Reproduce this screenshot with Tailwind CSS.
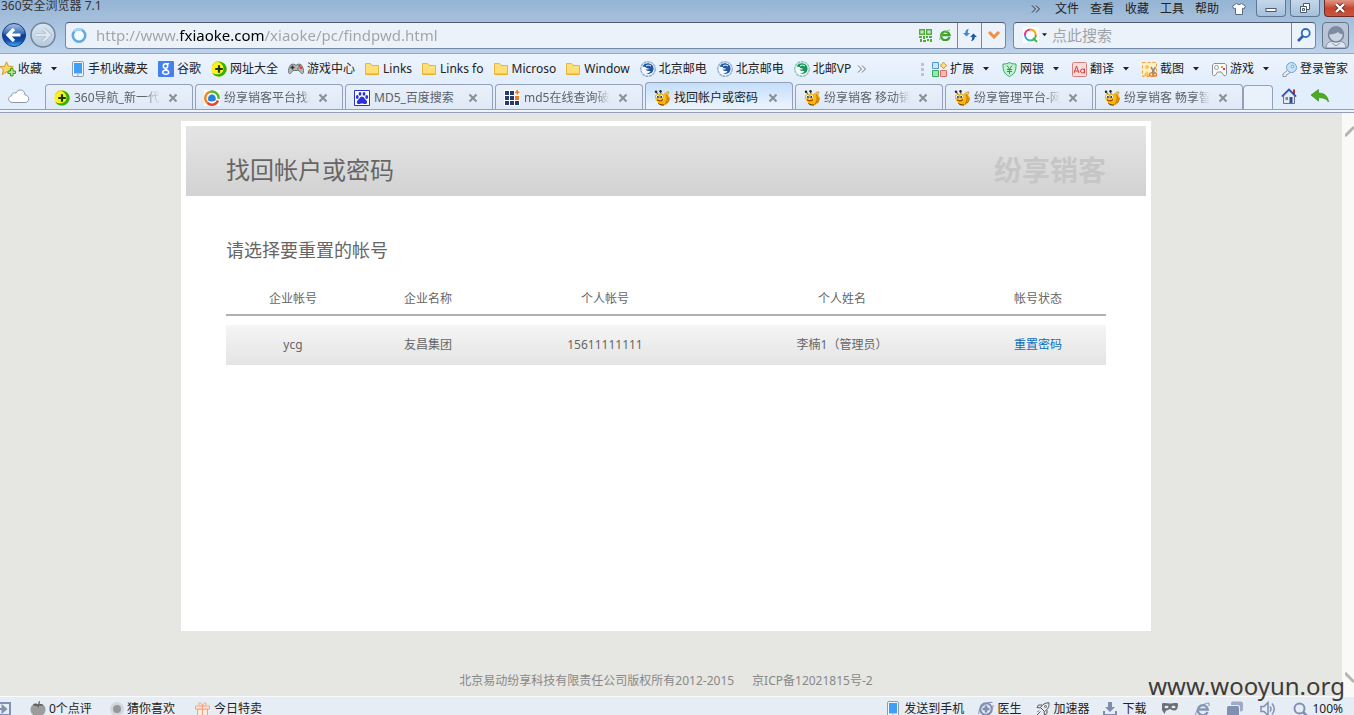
<!DOCTYPE html>
<html lang="zh-CN">

<head>
  <meta charset="UTF-8">
  <meta name="viewport" content="width=device-width, initial-scale=1.0">
  <title>找回帐户或密码</title>
  <script src="https://cdn.jsdelivr.net/npm/@tailwindcss/browser@4"></script>
</head>

<body class="h-screen overflow-hidden flex flex-col bg-[#e6e7e2] text-xs text-[#222] whitespace-nowrap font-['Noto_Sans','Noto_Sans_CJK_SC',sans-serif]">

<!-- 公用图标 -->
<svg class="absolute w-0 h-0" aria-hidden="true">
  <symbol id="i-360" viewBox="0 0 16 16">
    <circle cx="8" cy="8" r="7.700" fill="#fff01e"/>
    <path d="M6.500.5C12 0 15.700 4 15.700 8S12 15.900 7 15.600C4 15.300 2 13.500 1.200 11.800c3 2.200 8 2.200 10.300-.8C14 7 11.500 2 6.500.5z" fill="#2fb010"/>
    <path d="M1.500 4.500C2.500 2 5 .6 7.500.5" stroke="#b9d916" fill="none"/>
    <path d="M6.900 4.200h2.200v2.700h2.700v2.200H9.100v2.700H6.900V9.100H4.200V6.900h2.700z" fill="#123c10"/>
  </symbol>
  <symbol id="i-folder" viewBox="0 0 14 14">
    <path d="M.5 1.500h5l1.500 2h6.500v9H.5z" fill="#ffdf78" stroke="#e9b53a"/>
    <path d="M1 12h12" stroke="#f0a52c"/>
  </symbol>
  <symbol id="i-mail" viewBox="0 0 16 16">
    <circle cx="8" cy="8" r="7.200" fill="#f6f9fc" stroke="currentColor" stroke-opacity=".45" stroke-width="1.400" stroke-dasharray="3 .6"/>
    <path d="M2.500 5.500C4 2 9 1 12 3.800c2 2 2 5 .7 7-1.500 2-4.500 2.700-6.700 1.700 2.500-.2 4-1.200 4.500-2.500-2 .3-4-.3-5-1.500 1.500.3 3 0 4-.8C7.500 7.500 6 7 5.500 6z" fill="currentColor"/>
    <path d="M6 5c1.500-1.200 3.500-1 5 0" fill="none" stroke="#fff"/>
  </symbol>
  <symbol id="i-bee" viewBox="0 0 16 16">
    <path d="M4 5L2.500 2M7 4l-.5-2.500" stroke="#333"/>
    <circle cx="2" cy="1.800" r="1.200" fill="#222"/><circle cx="6.500" cy="1.300" r="1.200" fill="#222"/>
    <path d="M10.500 4c1.500-2 3.500-2.500 4.500-2-.2 1.500-1 3-2.500 3.500z" fill="#f3c86a" stroke="#b98217" stroke-width=".6"/>
    <path d="M9 4.500c4-1.500 7 1 6.500 5-.4 3.500-3.500 6-7 6-2.500 0-4.500-1.500-5-3.500z" fill="#fbb40a"/>
    <path d="M12.500 4.500c1.300 2.500 1 6.500-1.500 10M15 7.500c.3 2-.5 4-2 5.500" stroke="#b8690a" fill="none"/>
    <ellipse cx="5.800" cy="7.800" rx="5" ry="4.200" fill="#ffd028"/>
    <circle cx="3.500" cy="6.500" r="2" fill="#fff" stroke="#a87613" stroke-width=".5"/><circle cx="7.500" cy="6.500" r="2" fill="#fff" stroke="#a87613" stroke-width=".5"/>
    <circle cx="3.900" cy="6.900" r=".9" fill="#111"/><circle cx="7.200" cy="6.900" r=".9" fill="#111"/>
    <path d="M3 9.700c2 1.600 4.500 1.400 6-.4" stroke="#9b3a08" stroke-width="1.200" fill="none"/>
    <path d="M4.500 13.500c1.500 1.300 3.500 1.800 5.500 1.400" stroke="#4a3208" fill="none"/>
  </symbol>
  <symbol id="i-close" viewBox="0 0 10 10">
    <path d="M1.500 1.500l7 7M8.500 1.500l-7 7" stroke="#8a8f96" stroke-width="2"/>
  </symbol>
  <symbol id="i-caret" viewBox="0 0 6 4"><path d="M0 0h6L3 3.500z" fill="#222"/></symbol>
  <symbol id="i-phone" viewBox="0 0 12 16">
    <rect x=".5" y=".5" width="11" height="15" rx="1.500" fill="#f4f7fb" stroke="#8f9bad"/>
    <path d="M2 2h8v10.500H2z" fill="#3f9ff5"/><path d="M5 14h2" stroke="#8f9bad"/>
  </symbol>
  <symbol id="i-more" viewBox="0 0 9 8"><path d="M1 .5L4.500 4 1 7.500M5 .5L8.500 4 5 7.500" fill="none" stroke="currentColor"/></symbol>
  <linearGradient id="g-back" x2="0" y2="1"><stop stop-color="#a9c5ea"/><stop offset=".45" stop-color="#3566b8"/><stop offset=".5" stop-color="#0a3a94"/><stop offset=".75" stop-color="#0f4fae"/><stop offset="1" stop-color="#4db8f5"/></linearGradient>
  <linearGradient id="g-fwd" x2="0" y2="1"><stop stop-color="#dbe6f1"/><stop offset="1" stop-color="#b4c9de"/></linearGradient>
</svg>

<!-- 标题栏与地址栏 -->
<header class="h-[54px] shrink-0 bg-linear-to-b from-[#95b4d3] to-[#bdd3ec] border-b border-[#93a9c6]">
  <div class="flex h-[18px] justify-between">
    <h1 class="pl-px -mt-0.5 h-4 leading-4 text-[#333]">360安全浏览器 7.1</h1>
    <div class="flex items-start gap-1">
      <nav class="flex h-[18px] items-center gap-[11px] pr-1.5">
        <button class="mr-1" aria-label="更多"><svg class="w-[9px] h-2 text-[#333]"><use href="#i-more"/></svg></button>
        <button>文件</button>
        <button>查看</button>
        <button>收藏</button>
        <button>工具</button>
        <button>帮助</button>
        <button class="ml-0.5" aria-label="皮肤">
          <svg class="w-[14px] h-3" viewBox="0 0 14 12"><path d="M4.500.5Q7 3 9.500.5l4 2.500-1.500 3-1.500-.8v6.300h-7V5.200L2 6 .5 3z" fill="#fff" stroke="#5d6e82"/></svg>
        </button>
      </nav>
      <button class="w-[30px] h-[17px] flex items-center justify-center rounded-b-sm border border-t-0 border-[#5f7792] bg-linear-to-b from-[#c5d8eb] to-[#a5c0dc]" aria-label="最小化">
        <svg class="w-3 h-4" viewBox="0 0 12 16"><rect x="1" y="8.500" width="10" height="3" fill="#fff" stroke="#4c5a6b"/></svg>
      </button>
      <button class="w-[30px] h-[17px] flex items-center justify-center rounded-b-sm border border-t-0 border-[#5f7792] bg-linear-to-b from-[#c5d8eb] to-[#a5c0dc]" aria-label="还原">
        <svg class="w-3 h-3" viewBox="0 0 12 12" fill="#fff" stroke="#4c5a6b"><path d="M4.500 1.500h6v6h-6z"/><path d="M1.500 4.500h6v6h-6z"/><path d="M3.500 6.500h2v2h-2z"/></svg>
      </button>
      <button class="w-[30px] h-[17px] flex items-center justify-center rounded-bl-sm border border-t-0 border-r-0 border-[#6d2a22] bg-linear-to-b from-[#dd9585] via-[#c9452d] to-[#c85540]" aria-label="关闭">
        <svg class="w-3 h-[10px]" viewBox="0 0 12 10"><path d="M2 1l8 8M10 1L2 9" stroke="#5c2b28" stroke-width="4"/><path d="M2 1l8 8M10 1L2 9" stroke="#fff" stroke-width="2.400"/></svg>
      </button>
    </div>
  </div>

  <div class="flex items-center h-[34px] pl-0.5 pr-[5px]">
    <button aria-label="后退"><svg class="w-6 h-6" viewBox="0 0 24 24"><circle cx="12" cy="12" r="11.500" fill="url(#g-back)" stroke="#173a73"/><path d="M12 6L6 12l6 6M6.500 12h12" fill="none" stroke="#fff" stroke-width="3.200"/></svg></button>
    <button class="ml-1" aria-label="前进"><svg class="w-[26px] h-[26px]" viewBox="0 0 26 26"><circle cx="13" cy="13" r="12" fill="url(#g-fwd)" stroke="#71839a" stroke-width="1.500"/><path d="M13.500 7l6 6-6 6M19 13H6" fill="none" stroke="#a9bccf" stroke-width="4"/><path d="M13.500 7l6 6-6 6M19 13H6" fill="none" stroke="#dfe8f1" stroke-width="2.400"/></svg></button>

    <form class="ml-[9px] flex-1 flex h-[27px] items-stretch border border-[#7689a2] border-t-[#4d5b6d] rounded-sm bg-[#ecf2fa]">
      <svg class="ml-[5px] mr-[9px] w-4 h-full" viewBox="0 0 16 16"><circle cx="8" cy="8" r="6.200" fill="#f4faff" stroke="#5fa9e4" stroke-width="2.600"/><path d="M3 4a6.200 6.200 0 0 1 8-1.500" fill="none" stroke="#a9d5f5" stroke-width="2.400"/></svg>
      <input type="text" aria-label="地址" value="http://www.fxiaoke.com/xiaoke/pc/findpwd.html" class="flex-1 min-w-0 outline-none text-[15px] text-transparent bg-clip-text bg-[linear-gradient(to_right,#9ea3a8_84px,#000_84px,#000_168px,#9ea3a8_168px)]">
      <button type="button" class="w-[14px]" aria-label="二维码">
        <svg class="w-[13px] h-[13px]" viewBox="0 0 13 13" fill="#4fae38"><path d="M0 0h6v6H0zM7 0h6v6H7zM0 7h3v2H0zM4 7h2v3H4zM1 10h2v3H1zM4 11h3v2H4zM7 7h2v2H7zM10 7h3v2h-3zM8 10h2v2H8zM11 10h2v3h-2z"/><path d="M1.500 1.500h3v3h-3zM8.500 1.500h3v3h-3z" fill="#ecf2fa"/><path d="M2.500 2.500h1v1h-1zM9.500 2.500h1v1h-1z"/></svg>
      </button>
      <button type="button" class="w-6 flex items-center justify-center" aria-label="内核切换">
        <svg class="w-3 h-3" viewBox="0 0 12 12"><path d="M10.500 8A4.300 4.300 0 1 1 10.600 6.200H2.500" fill="none" stroke="#3da32b" stroke-width="2.300"/><path d="M.8 11C0 8 5 2.500 11 .8" stroke="#7cc95a" fill="none"/></svg>
      </button>
      <button type="button" class="w-6 flex items-center justify-center border-l border-[#7689a2]" aria-label="刷新">
        <svg class="w-[14px] h-[14px]" viewBox="0 0 14 14"><path d="M0 5L3.500 8.500 7 5H4.800C4.800 3.500 5 2 6 .8 3.500 1.200 2.200 3 2.200 5z" fill="#3e8ad8"/><path d="M14 9l-3.500-3.500L7 9h2.200c0 1.500-.2 3-1.200 4.200 2.500-.4 3.800-2.200 3.800-4.200z" fill="#1c58a5"/></svg>
      </button>
      <button type="button" class="w-6 flex items-center justify-center border-l border-[#7689a2]" aria-label="历史地址">
        <svg class="w-3 h-2" viewBox="0 0 12 8"><path d="M1 1l5 5 5-5" fill="none" stroke="#ee9040" stroke-width="3"/></svg>
      </button>
    </form>

    <form class="ml-[7px] w-[303px] flex h-[27px] items-stretch border border-[#7689a2] border-t-[#4d5b6d] rounded-sm bg-[#ecf2fa]">
      <button type="button" class="pl-[9px] flex items-center gap-[3px]" aria-label="搜索引擎">
        <svg class="w-4 h-4" viewBox="0 0 16 16"><path d="M0 0h16v16H0z" fill="#fff"/><g fill="none" stroke-width="2"><path d="M2 8a5.500 5.500 0 0 1 5-5.500" stroke="#f0308c"/><path d="M7 2.500A5.500 5.500 0 0 1 12.800 8" stroke="#f9a01b"/><path d="M2 8a5.500 5.500 0 0 0 5.500 5.500" stroke="#24a9e6"/><path d="M7.500 13.500A5.500 5.500 0 0 0 12.800 8M10 11l4 4" stroke="#3db54a"/></g></svg>
        <svg class="w-[5px] h-1"><use href="#i-caret"/></svg>
      </button>
      <input type="text" aria-label="搜索" placeholder="点此搜索" class="ml-[5px] flex-1 min-w-0 outline-none text-[15px] placeholder:text-[#9ea3a8]">
      <button type="button" class="w-6 flex items-center justify-center border-l border-[#7689a2]" aria-label="搜索">
        <svg class="w-[14px] h-[14px]" viewBox="0 0 14 14"><circle cx="8.700" cy="5" r="4" fill="#f3f8fd" stroke="#2c6ec4" stroke-width="1.800"/><path d="M6 8l-5 5" stroke="#2c5fae" stroke-width="2.600"/></svg>
      </button>
    </form>
    <button class="ml-1.5 w-[27px] h-[27px] flex items-end justify-center border border-[#65758a] rounded-sm bg-[#b9c5d6]" aria-label="用户">
      <svg class="w-[22px] h-[23px]" viewBox="0 0 22 23"><path d="M1 23c0-4 2-6 5-6.500h10c3 .5 5 2.500 5 6.500z" fill="#dde5ef" stroke="#8593a8"/><circle cx="11" cy="9.500" r="7.500" fill="#ccd5e2" stroke="#75839a" stroke-width="1.500"/><path d="M3.500 9.500C3.500 4 7 1.500 11 1.500S18.500 4 18.500 9.500C15 9 14 8 13 7c-2 1.500-5 2.500-9.500 2.500z" fill="#7d8ba1"/><path d="M7 18l4 3 4-3" fill="none" stroke="#8593a8"/></svg>
    </button>
  </div>
</header>

<!-- 收藏栏 -->
<nav class="h-7 shrink-0 pt-0.5 flex items-center justify-between bg-linear-to-b from-[#edf4fe] to-[#e2eefb]">
  <div class="flex items-center gap-[10px]">
    <button class="flex items-center gap-0.5">
      <svg class="w-4 h-4" viewBox="0 0 16 16"><path d="M6.500.8l1.900 4.400 4.800.4-3.600 3.200 1.100 4.700-4.200-2.500-4.200 2.500 1.100-4.700L0 5.600l4.700-.4z" fill="#ffd75e" stroke="#d99a2b"/><path d="M10.500 7.500h2.500V10h2.500v2.500H13V15h-2.500v-2.500H8V10h2.500z" fill="#b3e68a" stroke="#3c9a22"/></svg>
      收藏
      <svg class="ml-[7px] mr-[5px] w-1.5 h-1"><use href="#i-caret"/></svg>
    </button>
    <a href="#" class="flex items-center gap-1"><svg class="w-3 h-4"><use href="#i-phone"/></svg>手机收藏夹</a>
    <a href="#" class="flex items-center gap-[3px]">
      <svg class="w-4 h-4" viewBox="0 0 16 16"><rect width="16" height="16" rx="1" fill="#4580ee"/><g fill="none" stroke="#fff" stroke-width="1.500"><ellipse cx="7.500" cy="5" rx="2.200" ry="2.300"/><path d="M8 2.700h3.200M7.500 7.300c-1.200 1 1.300 1.300 2 2.200"/><ellipse cx="7.700" cy="11.300" rx="3" ry="2"/></g></svg>谷歌</a>
    <a href="#" class="flex items-center gap-[3px]"><svg class="w-4 h-4"><use href="#i-360"/></svg>网址大全</a>
    <a href="#" class="flex items-center gap-[3px]">
      <svg class="w-4 h-4" viewBox="0 0 16 16"><path d="M3 3.500l3-.5 1 1h2l1-1 3 .5c2 2 3 6 2.500 8-.5 1.500-2 1.500-3 0l-1.500-2H5l-1.500 2c-1 1.500-2.500 1.500-3 0C0 9.500 1 5.500 3 3.500z" fill="#b3b7bb" stroke="#72777c"/><path d="M4.500 4.500v4M2.500 6.500h4" stroke="#333" stroke-width="1.400"/><circle cx="11.500" cy="5" r="1.200" fill="#e7322a"/><circle cx="13" cy="7" r="1.200" fill="#e7322a"/><circle cx="10" cy="7.500" r="1" fill="#3cae3c"/></svg>游戏中心</a>
    <a href="#" class="flex items-center gap-1"><svg class="w-[14px] h-[14px]"><use href="#i-folder"/></svg>Links</a>
    <a href="#" class="flex items-center gap-1"><svg class="w-[14px] h-[14px]"><use href="#i-folder"/></svg>Links fo</a>
    <a href="#" class="flex items-center gap-1"><svg class="w-[14px] h-[14px]"><use href="#i-folder"/></svg>Microso</a>
    <a href="#" class="flex items-center gap-1"><svg class="w-[14px] h-[14px]"><use href="#i-folder"/></svg>Window</a>
    <a href="#" class="flex items-center gap-[3px]"><svg class="w-4 h-4 text-[#1e57a0]"><use href="#i-mail"/></svg>北京邮电</a>
    <a href="#" class="flex items-center gap-[3px]"><svg class="w-4 h-4 text-[#1e57a0]"><use href="#i-mail"/></svg>北京邮电</a>
    <a href="#" class="flex items-center gap-[3px]"><svg class="w-4 h-4 text-[#15935a]"><use href="#i-mail"/></svg>北邮VP</a>
    <button class="-ml-1" aria-label="更多收藏"><svg class="w-[9px] h-2 text-[#777]"><use href="#i-more"/></svg></button>
  </div>
  <div class="flex items-center pr-0.5">
    <svg class="mr-2 w-[3px] h-[13px]" viewBox="0 0 3 13" fill="#bfc4ca"><path d="M0 0h3v3H0zM0 5h3v3H0zM0 10h3v3H0z"/></svg>
    <button class="w-[70px] flex items-center gap-[3px]">
      <svg class="w-[15px] h-[15px]" viewBox="0 0 15 15"><path d="M.5.5h6v6h-6z" fill="#cfe6fa" stroke="#4d9bd1"/><path d="M.5 8.500h6v6h-6z" fill="#9be6b4" stroke="#35ab62"/><path d="M8.500 8.500h6v6h-6z" fill="#f8b9b9" stroke="#dd6d6d"/><path d="M11.500 0l1.300 2.200L15 3.500l-2.200 1.300L11.500 7l-1.300-2.200L8 3.500l2.200-1.300z" fill="#ffe38a" stroke="#e89a1a"/></svg>
      扩展<svg class="ml-1.5 w-1.5 h-1"><use href="#i-caret"/></svg>
    </button>
    <button class="w-[70px] flex items-center gap-[3px]">
      <svg class="w-[15px] h-[15px]" viewBox="0 0 15 15"><path d="M7.500.5c2 1.300 4.500 1.500 6.500 1.500.3 6-1 10-6.500 12.500C2 12 .7 8 1 2c2 0 4.500-.2 6.500-1.500z" fill="#c3f2d2" stroke="#35ab62"/><path d="M5 3.500L7.500 7 10 3.500M7.500 7v5M5 7.500h5M5 9.500h5" fill="none" stroke="#2b9a54"/></svg>
      网银<svg class="ml-1.5 w-1.5 h-1"><use href="#i-caret"/></svg>
    </button>
    <button class="w-[70px] flex items-center gap-[3px]">
      <svg class="w-[15px] h-[15px]" viewBox="0 0 15 15"><rect x=".5" y=".5" width="14" height="14" rx="1" fill="#fbdcdc" stroke="#d98080"/><g fill="none" stroke="#cf4040"><path d="M2 11l2.500-7L7 11M3 9h3"/><circle cx="10.500" cy="9" r="2"/><path d="M12.500 6.500V11.500"/></g></svg>
      翻译<svg class="ml-1.5 w-1.5 h-1"><use href="#i-caret"/></svg>
    </button>
    <button class="w-[70px] flex items-center gap-[3px]">
      <svg class="w-[15px] h-[15px]" viewBox="0 0 15 15"><path d="M.5.5h14v14H.5z" fill="#fff0c4" stroke="#e8a33b" stroke-dasharray="3 2"/><circle cx="5" cy="5" r="2" fill="#f1c665"/><path d="M1 14l4-5 3 5z" fill="#f1c665"/><path d="M9 5l3.500 6M13.500 5L10 11" stroke="#8a8a8a" stroke-width="1.500"/><circle cx="9.300" cy="12.500" r="1.700" fill="#fff" stroke="#e0772a" stroke-width="1.300"/><circle cx="13" cy="12.500" r="1.500" fill="#fff" stroke="#e0772a" stroke-width="1.300"/></svg>
      截图<svg class="ml-1.5 w-1.5 h-1"><use href="#i-caret"/></svg>
    </button>
    <button class="w-[70px] flex items-center gap-[3px]">
      <svg class="w-[15px] h-[15px]" viewBox="0 0 15 15"><path d="M2 1.500h11l1.500 1.500v9.500l-1 1.200h-1.500L9.500 10h-4L3 13.700H1.500l-1-1.200V3z" fill="#fafafa" stroke="#8b8f95"/><circle cx="4.500" cy="5.500" r="2" fill="#fff" stroke="#999"/><path d="M9 4h2v2H9z" fill="#f09c2a"/><path d="M11 6h2v2h-2z" fill="#e33c2c"/></svg>
      游戏<svg class="ml-1.5 w-1.5 h-1"><use href="#i-caret"/></svg>
    </button>
    <button class="w-[70px] flex items-center gap-[3px]">
      <svg class="w-[15px] h-[15px]" viewBox="0 0 15 15"><path d="M6 8L1 12v2.500h3l.5-2 2-.5 1.500-2" fill="#f2f2f2" stroke="#8b95a3"/><circle cx="9.500" cy="5.500" r="5" fill="#c5e2f8" stroke="#6ba6d6"/><circle cx="10.500" cy="4.500" r="1.300" fill="#fff" stroke="#6ba6d6"/></svg>
      登录管家
    </button>
  </div>
</nav>

<!-- 标签栏 -->
<div class="h-7 shrink-0 flex items-end bg-[#e2eefb] border-b border-[#93a0b8]">
  <button class="w-[45px] h-full pl-2" aria-label="云同步"><svg class="w-[22px] h-4" viewBox="0 0 22 16"><path d="M5 14.500c-5.500 0-5.500-6-1.500-6.500C4 4.500 7 4.500 8 5c1.500-4.500 9-4 9 2 5 .5 5 7.500 0 7.500z" fill="#fff" stroke="#8d97a6"/></svg></button>
  <div class="flex items-end gap-0.5">
    <div class="w-[148px] h-[25px] pl-2 pt-0.5 flex items-center gap-1 rounded-t-sm border border-b-0 border-[#93a0b8] bg-linear-to-b from-[#e9f0fa] to-[#dfe9f6]">
      <svg class="w-4 h-4 shrink-0"><use href="#i-360"/></svg>
      <a href="#" class="w-[86px] overflow-hidden text-[#5a626c] [mask-image:linear-gradient(to_right,#000_82%,transparent)]">360导航_新一代</a>
      <button class="ml-1" aria-label="关闭标签"><svg class="w-[10px] h-[10px]"><use href="#i-close"/></svg></button>
    </div>
    <div class="w-[148px] h-[25px] pl-2 pt-0.5 flex items-center gap-1 rounded-t-sm border border-b-0 border-[#93a0b8] bg-linear-to-b from-[#e9f0fa] to-[#dfe9f6]">
      <svg class="w-4 h-4 shrink-0" viewBox="0 0 16 16"><path d="M0 0h16v16H0z" fill="#fff"/><g fill="none" stroke-width="2.400"><path d="M3.500 13A6.500 6.500 0 0 1 6 1.800" stroke="#f2871f"/><path d="M6 1.800a6.500 6.500 0 0 1 8.500 7" stroke="#54b62d"/><path d="M14 10.500a6.500 6.500 0 0 1-10.500 2.500" stroke="#e8432e"/></g><path d="M4.500 11c-1.500-4 1-6.500 3.500-6.500s4.500 2.500 3.500 6q-3.500 1.500-7 .5z" fill="#2383dc"/></svg>
      <a href="#" class="w-[86px] overflow-hidden text-[#5a626c] [mask-image:linear-gradient(to_right,#000_90%,transparent)]">纷享销客平台找回</a>
      <button class="ml-1" aria-label="关闭标签"><svg class="w-[10px] h-[10px]"><use href="#i-close"/></svg></button>
    </div>
    <div class="w-[148px] h-[25px] pl-2 pt-0.5 flex items-center gap-1 rounded-t-sm border border-b-0 border-[#93a0b8] bg-linear-to-b from-[#e9f0fa] to-[#dfe9f6]">
      <svg class="w-4 h-4 shrink-0" viewBox="0 0 16 16"><path d="M.5.5h15v15H.5z" fill="#fff" stroke="#2a30d8"/><g fill="#2a30d8"><ellipse cx="3.300" cy="7" rx="1.400" ry="1.900"/><ellipse cx="6" cy="3.800" rx="1.400" ry="1.900"/><ellipse cx="10" cy="3.800" rx="1.400" ry="1.900"/><ellipse cx="12.700" cy="7" rx="1.400" ry="1.900"/><path d="M8 6.500c2 0 2.500 2.300 4 3.500s1.500 4-.5 4-2.200-.5-3.500-.5-1.500.5-3.500.5-2-2.800-.5-4S6 6.500 8 6.500z"/></g></svg>
      <a href="#" class="w-[86px] overflow-hidden text-[#5a626c]">MD5_百度搜索</a>
      <button class="ml-1" aria-label="关闭标签"><svg class="w-[10px] h-[10px]"><use href="#i-close"/></svg></button>
    </div>
    <div class="w-[148px] h-[25px] pl-2 pt-0.5 flex items-center gap-1 rounded-t-sm border border-b-0 border-[#93a0b8] bg-linear-to-b from-[#e9f0fa] to-[#dfe9f6]">
      <svg class="w-4 h-4 shrink-0" viewBox="0 0 16 16"><path d="M0 0h16v16H0z" fill="#fff"/><path d="M1 1h4v4H1zM6 1h4v4H6zM1 6h4v4H1zM6 6h4v4H6zM1 11h4v4H1zM6 11h4v4H6zM11 11h4v4h-4z" fill="#263a72"/><path d="M11 6h4v4h-4zM12.500 0h1.500v1.500h1.500V3H14v1.500h-1.500V3H11V1.500h1.500z" fill="#f37a1d"/></svg>
      <a href="#" class="w-[86px] overflow-hidden text-[#5a626c] [mask-image:linear-gradient(to_right,#000_82%,transparent)]">md5在线查询破解</a>
      <button class="ml-1" aria-label="关闭标签"><svg class="w-[10px] h-[10px]"><use href="#i-close"/></svg></button>
    </div>
    <div class="w-[148px] h-[27px] pl-2 pt-1 flex items-center gap-1 rounded-t-sm border border-b-0 border-[#93a0b8] bg-linear-to-b from-[#c3defb] to-[#eef5fd]">
      <svg class="w-4 h-4 shrink-0"><use href="#i-bee"/></svg>
      <a href="#" class="w-[86px] overflow-hidden text-[#222]">找回帐户或密码</a>
      <button class="ml-1" aria-label="关闭标签"><svg class="w-[10px] h-[10px]"><use href="#i-close"/></svg></button>
    </div>
    <div class="w-[148px] h-[25px] pl-2 pt-0.5 flex items-center gap-1 rounded-t-sm border border-b-0 border-[#93a0b8] bg-linear-to-b from-[#e9f0fa] to-[#dfe9f6]">
      <svg class="w-4 h-4 shrink-0"><use href="#i-bee"/></svg>
      <a href="#" class="w-[86px] overflow-hidden text-[#5a626c] [mask-image:linear-gradient(to_right,#000_82%,transparent)]">纷享销客 移动销售</a>
      <button class="ml-1" aria-label="关闭标签"><svg class="w-[10px] h-[10px]"><use href="#i-close"/></svg></button>
    </div>
    <div class="w-[148px] h-[25px] pl-2 pt-0.5 flex items-center gap-1 rounded-t-sm border border-b-0 border-[#93a0b8] bg-linear-to-b from-[#e9f0fa] to-[#dfe9f6]">
      <svg class="w-4 h-4 shrink-0"><use href="#i-bee"/></svg>
      <a href="#" class="w-[86px] overflow-hidden text-[#5a626c] [mask-image:linear-gradient(to_right,#000_82%,transparent)]">纷享管理平台-网</a>
      <button class="ml-1" aria-label="关闭标签"><svg class="w-[10px] h-[10px]"><use href="#i-close"/></svg></button>
    </div>
    <div class="w-[148px] h-[25px] pl-2 pt-0.5 flex items-center gap-1 rounded-t-sm border border-b-0 border-[#93a0b8] bg-linear-to-b from-[#e9f0fa] to-[#dfe9f6]">
      <svg class="w-4 h-4 shrink-0"><use href="#i-bee"/></svg>
      <a href="#" class="w-[86px] overflow-hidden text-[#5a626c] [mask-image:linear-gradient(to_right,#000_82%,transparent)]">纷享销客 畅享智能</a>
      <button class="ml-1" aria-label="关闭标签"><svg class="w-[10px] h-[10px]"><use href="#i-close"/></svg></button>
    </div>
  </div>
  <button class="w-[30px] h-6 rounded-t-sm border border-b-0 border-[#93a0b8] bg-[#e9f1fb]" aria-label="新建标签"></button>
  <div class="h-full flex items-center gap-[14px] pl-2">
    <button aria-label="主页"><svg class="w-4 h-4" viewBox="0 0 16 16"><path d="M12 1.500h2v5h-2z" fill="#b03030"/><path d="M2.500 8L8 2.500 13.500 8v7.500h-11z" fill="#e4e9f2" stroke="#6a7386"/><path d="M.8 8.500L8 1.300l7.200 7.200" fill="none" stroke="#2a41a8" stroke-width="1.500"/><path d="M8.500 9h3v6h-3z" fill="#28509e"/><path d="M4.500 9h2.500v3H4.500z" fill="#7d8794"/></svg></button>
    <button aria-label="恢复标签"><svg class="w-[18px] h-[14px]" viewBox="0 0 18 14"><path d="M0 6L7.500.5V4c6 0 9.500 3 10 9-2.500-3.500-5.500-4.500-10-4.200v3.400z" fill="#4cab1f" stroke="#2f8a10" stroke-width=".6"/></svg></button>
  </div>
</div>
<div class="h-[3px] shrink-0 bg-[#eef4fc] border-b border-[#93a0b8]"></div>

<!-- 网页内容 -->
<div class="relative flex-1 min-h-0 flex">
  <main class="flex-1 pt-2 pr-[10px] text-[#666]">
    <section class="mx-auto w-[970px] h-[510px] bg-white p-[5px]">
      <div class="h-[70px] pt-[18px] px-10 flex items-center justify-between bg-linear-to-b from-[#e5e5e5] to-[#d2d2d2]">
        <h2 class="text-2xl">找回帐户或密码</h2>
        <strong class="text-[28px] leading-8 text-[#c6c6c6]">纷享销客</strong>
      </div>
      <div class="px-10 pt-10">
        <h3 class="text-lg">请选择要重置的帐号</h3>
        <table class="mt-[19px] w-full table-fixed border-collapse text-center">
          <thead>
            <tr class="h-8 border-b-2 border-[#b0b0b0]">
              <th class="w-[134px] font-normal">企业帐号</th>
              <th class="w-[136px] font-normal">企业名称</th>
              <th class="w-[218px] font-normal">个人帐号</th>
              <th class="w-[256px] font-normal">个人姓名</th>
              <th class="w-[136px] font-normal">帐号状态</th>
            </tr>
          </thead>
          <tbody>
            <tr class="h-[10px]"><td colspan="5"></td></tr>
            <tr class="h-10 bg-linear-to-b from-[#f5f5f5] to-[#e4e4e4]">
              <td>ycg</td>
              <td>友昌集团</td>
              <td>15611111111</td>
              <td>李楠1（管理员）</td>
              <td><a href="#" class="text-[#0a6ebd]">重置密码</a></td>
            </tr>
          </tbody>
        </table>
      </div>
    </section>
    <footer class="mt-10 flex justify-center gap-[18px] text-[#888] leading-5">
      <span>北京易动纷享科技有限责任公司版权所有2012-2015</span>
      <span>京ICP备12021815号-2</span>
    </footer>
  </main>
  <!-- 滚动条 -->
  <div class="w-3 flex flex-col items-end justify-between overflow-hidden bg-[#f9f9f8] pt-3 pb-3">
    <svg class="w-[9px] h-3" viewBox="0 0 9 12"><path d="M0 11L9 2" stroke="#b4b4b4" stroke-width="3"/></svg>
    <svg class="w-[9px] h-3" viewBox="0 0 9 12"><path d="M0 1l9 9" stroke="#b4b4b4" stroke-width="3"/></svg>
  </div>
  <!-- 水印 -->
  <div class="absolute right-[9px] -bottom-1 text-2xl leading-7 text-[#3c3c3c] z-10">www.wooyun.org</div>
</div>

<!-- 状态栏 -->
<footer class="h-[19px] shrink-0 overflow-hidden bg-[#e7edf5] border-t border-[#f8fafc]">
  <div class="h-6 flex items-center justify-between pr-[11px]">
    <div class="flex items-center">
      <button class="mr-[19px]" aria-label="侧边栏"><svg class="w-[11px] h-[14px]" viewBox="0 0 11 14"><path d="M0 1h10v12H0" fill="none" stroke="#8291b3" stroke-width="2"/><path d="M0 7h4M2.500 4l3.500 3-3.500 3z" stroke="#8291b3" stroke-width="2" fill="#8291b3"/></svg></button>
      <button class="flex items-center gap-[3px] mr-[18px]">
        <svg class="w-4 h-4" viewBox="0 0 16 16"><path d="M8 4c4-2 7.500 0 7.500 4.500S12 15.500 8 15.500.5 13 .5 8.500 4 2 8 4z" fill="#9c9c9c"/><path d="M3 3c2-1 4-.5 5 .5L9 0l1 .5-.5 2.800c1.500-.5 3 0 4 1-2 .7-3 .5-4.500.3L8.500 7 7 4.700C5.500 5.500 4 5 3 3z" fill="#5f5f5f"/></svg>0个点评
      </button>
      <button class="flex items-center gap-[3px] mr-5">
        <svg class="w-[14px] h-[14px]" viewBox="0 0 14 14"><circle cx="7" cy="7" r="7" fill="#d3d7db"/><circle cx="7" cy="7" r="4" fill="#94989c"/></svg>猜你喜欢
      </button>
      <button class="flex items-center gap-1">
        <svg class="w-[15px] h-[15px]" viewBox="0 0 15 15" fill="#fdeadf" stroke="#f2a27c"><path d="M2.500 7h10v7.500h-10z"/><path d="M.5 4h14v3H.5z"/><path d="M7.500 4v10.500M7.500 4C3 4.500 3 0 5.500 1 7 1.500 7.500 4 7.500 4S8 1.500 9.500 1c2.500-1 2.500 3.500-2 3z"/></svg>今日特卖
      </button>
    </div>
    <div class="flex items-center">
      <button class="flex items-center gap-[5px] mr-[14px]"><svg class="w-3 h-4"><use href="#i-phone"/></svg>发送到手机</button>
      <button class="flex items-center gap-[3px] mr-[15px]">
        <svg class="w-4 h-4" viewBox="0 0 16 16" fill="none" stroke="#7e8eb0"><circle cx="8" cy="8" r="5.800" stroke-width="2"/><path d="M8 4.500v7M4.500 8h7" stroke-width="2.600"/><path d="M1 13C-1 9 8 0 14.500 1.500M15 4c1 4-6 12-12 11"/></svg>医生
      </button>
      <button class="flex items-center gap-[3px] mr-[14px]">
        <svg class="w-[14px] h-[14px]" viewBox="0 0 14 14" fill="none" stroke="#555"><path d="M13 .8C9 .8 7 2 4.500 5.500L8.500 9.500C12 7 13.200 5 13 .8zM6 3H2.500L1 5.500l3.500.5M11 8v3.500L8.500 13 8 9.500M4.500 9.500L1 13M3 8.500L1.500 10"/><circle cx="9.500" cy="4.500" r="1"/></svg>加速器
      </button>
      <button class="flex items-center gap-[5px] mr-4">
        <svg class="w-[14px] h-[14px]" viewBox="0 0 14 14" fill="#7e8eb0"><path d="M5 0h4v5h3L7 10 2 5h3z"/><path d="M0 9h2v3h10V9h2v5H0z"/></svg>下载
      </button>
      <div class="flex items-center gap-[17px]">
        <button aria-label="无痕模式"><svg class="w-4 h-4" viewBox="0 0 16 16"><path d="M0 2.500c3-1 5 0 8 0s5-1 8 0c0 6-1.500 7-4 7S8.800 8 8 8s-1.500 1.500-4 1.500L2.500 13 0 9z" fill="#6d7076"/><ellipse cx="4.500" cy="6" rx="2" ry="1.300" fill="#e7edf5"/><ellipse cx="11.500" cy="6" rx="2" ry="1.300" fill="#e7edf5"/></svg></button>
        <button aria-label="浏览器医生"><svg class="w-[15px] h-[15px]" viewBox="0 0 15 15"><path d="M12.500 10A5 5 0 1 1 12.800 7.500H4" fill="none" stroke="#8595b5" stroke-width="2.300"/><path d="M1 14C-1 10 7 1 14 1v3" stroke="#8595b5" fill="none"/></svg></button>
        <button aria-label="窗口"><svg class="w-4 h-4" viewBox="0 0 16 16"><path d="M4 2.500q0-2 2-2h8q2 0 2 2v6q0 2-2 2h-1V6q0-2-2-2H4z" fill="#9eabc5"/><rect y="5" width="12" height="10" rx="1.500" fill="#8090b3"/></svg></button>
        <button aria-label="声音"><svg class="w-4 h-4" viewBox="0 0 16 16" fill="none" stroke="#8090b3" stroke-width="1.500"><path d="M1 5.500h3L8 1.500v13l-4-4H1z"/><path d="M10 5.500q2 2.500 0 5M12 2.500q4.500 5.500 0 11"/></svg></button>
        <button class="flex items-center gap-1"><svg class="w-[15px] h-[15px]" viewBox="0 0 15 15" fill="none" stroke="#8090b3" stroke-width="2"><circle cx="6.500" cy="6.500" r="5"/><path d="M10 10l4.500 4.500" stroke-width="2.600"/></svg>100%</button>
      </div>
    </div>
  </div>
</footer>
</body>

</html>
